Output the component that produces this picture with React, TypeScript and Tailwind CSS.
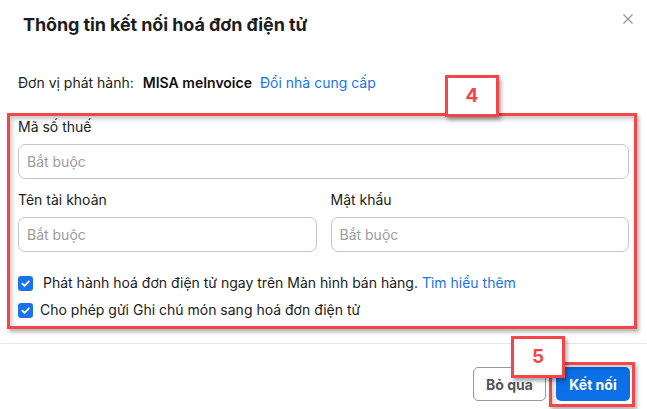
import React from 'react'

function Check() {
  return (
    <span className="flex h-[15px] w-[15px] shrink-0 items-center justify-center rounded-[3px] bg-[#1a73e8]">
      <svg width="11" height="11" viewBox="0 0 12 12" fill="none">
        <path d="M2.5 6.2 5 8.6 9.6 3.6" stroke="white" strokeWidth="1.9" strokeLinecap="round" strokeLinejoin="round" />
      </svg>
    </span>
  )
}

function Field({ label }: { label: string }) {
  return (
    <div className="flex flex-col">
      <label className="h-5 leading-5 text-[14px] text-[#212121]">{label}</label>
      <div className="mt-[7px] flex h-[35px] items-center rounded-[7px] border border-[#c6c6c6] px-[8px] text-[14px] text-[#9c9c9c]">
        Bắt buộc
      </div>
    </div>
  )
}

// annotation badge, sits over the dialog content
function Badge({ n, className }: { n: string; className: string }) {
  return (
    <div
      className={
        'absolute flex items-center justify-center border-[3px] border-[#f2464b] bg-white text-[19px] font-bold text-[#f2464b] shadow-[2px_3px_4px_rgba(0,0,0,0.35)] ' +
        className
      }
    >
      {n}
    </div>
  )
}

export default function App() {
  return (
    <div className="relative h-[409px] w-[647px] overflow-hidden bg-white font-['Inter','Liberation_Sans',sans-serif] text-[#212121]">
      <div className="px-[23px] pt-[11px]">
        <h1 className="h-7 text-[18px] font-bold leading-7 tracking-[-0.1px] text-[#1c1c1c]">
          Thông tin kết nối hoá đơn điện tử
        </h1>
      </div>
      <button className="absolute right-[13px] top-[13px] text-[#9a9a9a]">
        <svg width="12" height="12" viewBox="0 0 12 12">
          <path d="M1.5 1.5 10.5 10.5M10.5 1.5 1.5 10.5" stroke="currentColor" strokeWidth="1.4" />
        </svg>
      </button>

      <div className="mt-[34px] flex h-5 items-center px-[18px] text-[14px] leading-5">
        <span>Đơn vị phát hành:</span>
        <span className="ml-[9px] font-semibold text-[#111]">MISA meInvoice</span>
        <span className="ml-[8px] text-[#1a73e8]">Đổi nhà cung cấp</span>
      </div>

      <div className="mt-[24px] flex flex-col px-[18px]">
        <Field label="Mã số thuế" />
        <div className="mt-[11px] grid grid-cols-2 gap-[14px]">
          <Field label="Tên tài khoản" />
          <Field label="Mật khẩu" />
        </div>
        <div className="mt-[21px] flex flex-col gap-[7px] text-[14px] leading-5">
          <div className="flex items-center">
            <Check />
            <span className="ml-[10px]">
              Phát hành hoá đơn điện tử ngay trên Màn hình bán hàng.{' '}
              <span className="text-[#1a73e8]">Tìm hiểu thêm</span>
            </span>
          </div>
          <div className="flex items-center">
            <Check />
            <span className="ml-[7px]">Cho phép gửi Ghi chú món sang hoá đơn điện tử</span>
          </div>
        </div>
      </div>

      <div className="mt-[23px] h-px bg-[#e6e6e6]" />

      <div className="mt-[23px] flex justify-end gap-[10px] px-[17px]">
        <button className="flex h-[34px] w-[73px] items-center justify-center rounded-[5px] border border-[#9a9a9a] text-[14px] font-bold text-[#555]">
          Bỏ qua
        </button>
        <button className="flex h-[34px] w-[74px] items-center justify-center rounded-[5px] bg-[#0c6fe6] text-[14px] font-bold text-white">
          Kết nối
        </button>
      </div>

      {/* red annotation frames */}
      <div className="pointer-events-none absolute left-[7px] top-[113px] h-[216px] w-[630px] border-[3px] border-[#f2464b] shadow-[2px_3px_4px_rgba(0,0,0,0.3),inset_2px_3px_4px_rgba(0,0,0,0.22)]" />
      <div className="pointer-events-none absolute left-[549px] top-[362px] h-[45px] w-[86px] border-[3px] border-[#f2464b] shadow-[2px_3px_4px_rgba(0,0,0,0.3),inset_2px_3px_4px_rgba(0,0,0,0.22)]" />
      <Badge n="4" className="left-[445px] top-[75px] h-[42px] w-[54px]" />
      <Badge n="5" className="left-[511px] top-[336px] h-[42px] w-[54px]" />
    </div>
  )
}
